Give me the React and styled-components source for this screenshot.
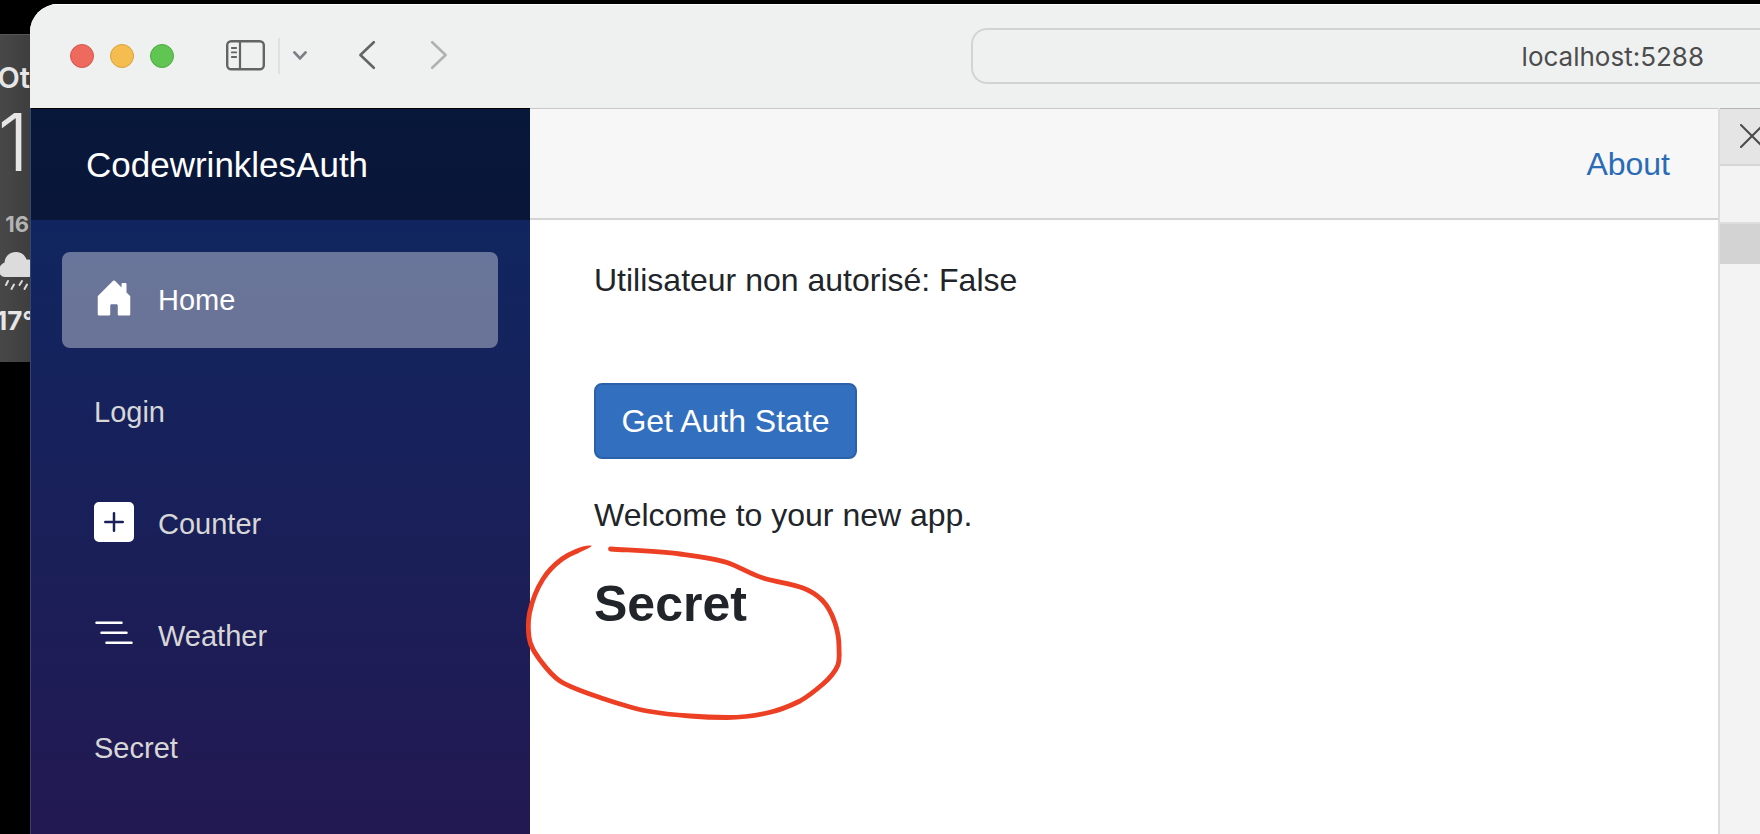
import React from "react";
import styled, { createGlobalStyle } from "styled-components";

const GlobalStyle = createGlobalStyle`
  *, *::before, *::after { box-sizing: border-box; }
  body {
    margin: 0;
    background: #000;
    color: #212529;
    font-family: "Liberation Sans", Arial, sans-serif;
    font-size: 32px;
    line-height: 48px;
    overflow-x: hidden;
  }
  button, input { font: inherit; }
`;

const Desktop = styled.div`
  display: flex;
  min-height: 100vh;
  background: #000;
`;

/* Weather widget, mostly hidden behind the browser window */
const Widget = styled.aside`
  width: 30px;
  flex: none;
  align-self: flex-start;
  margin-top: 34px;
  height: 328px;
  overflow: hidden;
  display: flex;
  flex-direction: column;
  align-items: flex-end;
  background: linear-gradient(90deg, #484848, #3e3e3e);
  border-top: 1px solid #555;
  color: #e6e6e6;
  font-family: Inter, sans-serif;
  white-space: nowrap;
`;

const City = styled.div`
  margin-top: 23px;
  font-size: 29px;
  font-weight: 600;
  line-height: 40px;
`;

const Temperature = styled.div`
  padding-right: 1px;
  font-size: 80px;
  font-weight: 300;
  line-height: 88px;
`;

const Hour = styled.div`
  margin-top: 22px;
  padding-right: 1px;
  font-size: 22px;
  font-weight: 700;
  line-height: 32px;
  color: #b4b4b4;
`;

const RainIcon = styled.svg`
  display: block;
  flex: none;
  width: 30px;
  height: 40px;
  margin-top: 12px;
`;

const HourTemperature = styled.div`
  align-self: flex-start;
  margin: 13px 0 0 -4px;
  font-size: 26px;
  font-weight: 700;
  line-height: 32px;
`;

const BrowserWindow = styled.div`
  flex: 1;
  min-width: 0;
  margin-top: 4px;
  display: flex;
  flex-direction: column;
  border-top-left-radius: 28px;
  overflow: hidden;
  background: #fff;
`;

const TitleBar = styled.header`
  display: grid;
  grid-template-columns: 31fr 26fr;
  align-items: center;
  height: 104px;
  flex: none;
  padding-bottom: 1px;
  background: #eff1f1;
  border-top: 1px solid #fff;
`;

const Controls = styled.div`
  display: flex;
  align-items: center;
  padding-left: 40px;
`;

const Lights = styled.div`
  display: flex;
  gap: 16px;
  margin-right: 52px;
`;

const Light = styled.button`
  width: 24px;
  height: 24px;
  padding: 0;
  border-radius: 50%;
  border: 1px solid ${(p) => p.$edge};
  background: ${(p) => p.$color};
`;

const ToolButton = styled.button`
  display: flex;
  padding: 0;
  border: 0;
  background: none;
  color: ${(p) => (p.$faded ? "#b0b2b2" : "#636565")};
  margin-right: ${(p) => p.$gap || 0}px;

  svg { display: block; }
`;

const Divider = styled.span`
  width: 2px;
  height: 36px;
  margin-right: 12px;
  background: #e0e2e2;
`;

const Address = styled.input`
  width: 100%;
  height: 56px;
  padding: 0 56px 0 16px;
  border: 2px solid #d2d4d3;
  border-right: 0;
  border-radius: 16px 0 0 16px;
  background: transparent;
  color: #4c4c4c;
  font-family: Inter, sans-serif;
  font-size: 26px;
  text-align: right;
`;

const Viewport = styled.div`
  flex: 1;
  display: flex;
`;

const Sidebar = styled.div`
  width: 500px;
  flex: none;
  background: linear-gradient(180deg, #0d2862, #231952);
  border-left: 1px solid rgba(255, 255, 255, 0.15);
`;

const Brand = styled.div`
  display: flex;
  align-items: center;
  height: 112px;
  padding-left: 55px;
  border-top: 1px solid #000;
  background: rgba(0, 0, 0, 0.4);

  a {
    color: #fff;
    font-size: 35px;
    text-decoration: none;
  }
`;

const Nav = styled.nav`
  display: flex;
  flex-direction: column;
  gap: 16px;
  padding: 32px 32px 32px 31px;
`;

const NavItem = styled.a`
  display: flex;
  align-items: center;
  gap: 24px;
  height: 96px;
  padding: 0 32px;
  border-radius: 8px;
  font-size: 29px;
  text-decoration: none;
  color: ${(p) => (p.$active ? "#fff" : "#d7d7d7")};
  background: ${(p) => (p.$active ? "rgba(255, 255, 255, 0.37)" : "transparent")};
`;

const NavIcon = styled.svg`
  width: 40px;
  height: 40px;
  margin-bottom: 4px;
  fill: #fff;
`;

const Page = styled.div`
  flex: 1;
  min-width: 0;
`;

const TopRow = styled.div`
  display: flex;
  align-items: center;
  justify-content: flex-end;
  height: 112px;
  padding-right: 48px;
  background: #f7f7f7;
  border-top: 1px solid #c9c9c9;
  border-bottom: 2px solid #d4d4d4;

  a {
    color: #2a6bb6;
    text-decoration: none;
  }
`;

const Content = styled.main`
  padding: 36px 48px 32px 64px;
`;

const Text = styled.p`
  margin: 0 0 35px;
`;

const AuthStatus = styled(Text)`
  margin-bottom: 79px;
`;

const PrimaryButton = styled.button`
  display: block;
  min-width: 263px;
  margin-bottom: 32px;
  padding: 12px 24px;
  border: 2px solid #2b61a8;
  border-radius: 8px;
  background: #336fbf;
  color: #fff;
`;

const Marked = styled.div`
  position: relative;
`;

const Heading = styled.h3`
  margin: 0;
  font-size: 50px;
  line-height: 60px;
  font-weight: 700;
`;

const Scribble = styled.svg`
  position: absolute;
  left: -74px;
  top: -34px;
  width: 330px;
  height: 185px;
  pointer-events: none;
`;

const Inspector = styled.aside`
  width: 42px;
  flex: none;
  overflow: hidden;
  border-left: 2px solid #dcdcdc;
  background: #f3f3f3;
`;

const InspectorHeader = styled.div`
  height: 58px;
  padding: 15px 0 0 20px;
  background: #e5e5e5;
  border-top: 1px solid #b4b4b4;
  border-bottom: 2px solid #d6d6d6;
`;

const InspectorRow = styled.div`
  height: 42px;
  margin-top: 56px;
  border-top: 2px solid #dedede;
  background: #d3d3d3;
`;

const icons = {
  home: "M6.5 14.5v-3.505c0-.245.25-.495.5-.495h2c.25 0 .5.25.5.5v3.5a.5.5 0 0 0 .5.5h4a.5.5 0 0 0 .5-.5v-7a.5.5 0 0 0-.146-.354L13 5.793V2.5a.5.5 0 0 0-.5-.5h-1a.5.5 0 0 0-.5.5v1.293L8.354 1.146a.5.5 0 0 0-.708 0l-6 6A.5.5 0 0 0 1.5 7.5v7a.5.5 0 0 0 .5.5h4a.5.5 0 0 0 .5-.5Z",
  counter:
    "M2 0a2 2 0 0 0-2 2v12a2 2 0 0 0 2 2h12a2 2 0 0 0 2-2V2a2 2 0 0 0-2-2H2zm6.5 4.5v3h3a.5.5 0 0 1 0 1h-3v3a.5.5 0 0 1-1 0v-3h-3a.5.5 0 0 1 0-1h3v-3a.5.5 0 0 1 1 0z",
  weather:
    "M4.5 11.5A.5.5 0 0 1 5 11h10a.5.5 0 0 1 0 1H5a.5.5 0 0 1-.5-.5zm-2-4A.5.5 0 0 1 3 7h10a.5.5 0 0 1 0 1H3a.5.5 0 0 1-.5-.5zm-2-4A.5.5 0 0 1 1 3h10a.5.5 0 0 1 0 1H1a.5.5 0 0 1-.5-.5z",
};

const links = [
  { label: "Home", icon: "home", active: true },
  { label: "Login" },
  { label: "Counter", icon: "counter" },
  { label: "Weather", icon: "weather" },
  { label: "Secret" },
];

const lights = [
  { name: "Close", color: "#ee6a5f", edge: "#d5554b" },
  { name: "Minimize", color: "#f5bd4f", edge: "#d9a13c" },
  { name: "Zoom", color: "#61c554", edge: "#4cab40" },
];

export default function App() {
  return (
    <>
      <GlobalStyle />
      <Desktop>
        <Widget>
          <City>Ot</City>
          <Temperature>1</Temperature>
          <Hour>16</Hour>
          <RainIcon viewBox="0 0 30 40" aria-hidden="true">
            <path
              d="M5 25C1 25-1 22-1 18.500C-1 15 1 12 4.500 10.500C5 4 10 0 16 0C21 0 25 3 26.500 7.500C33 7 36 11 36 16S32 25 28 25Z"
              fill="#dcdcdc"
            />
            <path
              d="M8 29l-2 4M14 32.500l-2.500 4.500M22 29l-2.500 4M27 32.500l-2.500 4.500"
              stroke="#dcdcdc"
              strokeWidth="2"
              strokeLinecap="round"
            />
          </RainIcon>
          <HourTemperature>17°</HourTemperature>
        </Widget>

        <BrowserWindow>
          <TitleBar>
            <Controls>
              <Lights>
                {lights.map((l) => (
                  <Light key={l.name} aria-label={l.name} $color={l.color} $edge={l.edge} />
                ))}
              </Lights>
              <ToolButton aria-label="Show sidebar" $gap={13}>
                <svg width="39" height="32" viewBox="0 0 39 32" fill="none" stroke="currentColor">
                  <rect x="1.2" y="1.2" width="36.6" height="28" rx="4" strokeWidth="2.4" />
                  <path d="M14 1v28" strokeWidth="2.2" />
                  <path d="M5.8 8h4.4M5.8 12.4h4.4M5.8 17h4.4" strokeWidth="1.8" strokeLinecap="round" />
                </svg>
              </ToolButton>
              <Divider />
              <ToolButton aria-label="Tab groups" $gap={50}>
                <svg width="16" height="12" viewBox="0 0 16 12" fill="none" stroke="#7d7f84" strokeWidth="2.8" strokeLinecap="round" strokeLinejoin="round">
                  <path d="M2.4 2.4L8 8.4l5.600-6" />
                </svg>
              </ToolButton>
              <ToolButton aria-label="Back" $gap={54}>
                <svg width="18" height="32" viewBox="0 0 18 32" fill="none" stroke="currentColor" strokeWidth="2.6" strokeLinecap="round" strokeLinejoin="round">
                  <path d="M15.800 2.200L2.400 15l13.400 12.800" />
                </svg>
              </ToolButton>
              <ToolButton aria-label="Forward" $faded>
                <svg width="18" height="32" viewBox="0 0 18 32" fill="none" stroke="currentColor" strokeWidth="2.6" strokeLinecap="round" strokeLinejoin="round">
                  <path d="M2.200 2.200L15.600 15 2.200 27.800" />
                </svg>
              </ToolButton>
            </Controls>
            <Address aria-label="Address" defaultValue="localhost:5288" />
          </TitleBar>

          <Viewport>
            <Sidebar>
              <Brand>
                <a href="#">CodewrinklesAuth</a>
              </Brand>
              <Nav>
                {links.map((l) => (
                  <NavItem key={l.label} href="#" $active={l.active}>
                    {l.icon && (
                      <NavIcon viewBox="0 0 16 16" aria-hidden="true">
                        <path d={icons[l.icon]} />
                      </NavIcon>
                    )}
                    {l.label}
                  </NavItem>
                ))}
              </Nav>
            </Sidebar>

            <Page>
              <TopRow>
                <a href="#">About</a>
              </TopRow>
              <Content>
                <AuthStatus>Utilisateur non autorisé: False</AuthStatus>
                <PrimaryButton>Get Auth State</PrimaryButton>
                <Text>Welcome to your new app.</Text>
                <Marked>
                  <Heading>Secret</Heading>
                  <Scribble viewBox="520 540 330 185" aria-hidden="true">
                    <path
                      d="M610.500 549C635 550.500 660 551.500 680 554C698 556.500 714 558.500 727 562.500C740 567 750 574 763 578C776 582 791 583.500 803 588C811 591 817 595 822 600C828 606 832 614 835 623C838 632 839 640 839 647C839 654 840 659 838 665C835 672 830 678 823 684C816 690 809 696 800 701C790 706 779 710.500 767 713C754 716 741 717.500 727 717.500C714 717.500 702 717 690 716C675 715 661 713.500 647 711C631 708 615 702.500 600 697.500C585 692.500 570 687.500 560 681C552 676 546 668 540 660C535 653 530 646 529 637C528 629 528 621 529.500 613C532 601 536 590 543 579C548 571 554 565 562 559C566 556 571 553.500 576 551.500"
                      fill="none"
                      stroke="#ec3f23"
                      strokeWidth="4.800"
                      strokeLinecap="round"
                    />
                    <path d="M575 549.300C581 546.500 587 545 591.500 545.500C592 547 585 550 577 553.700Z" fill="#ec3f23" />
                  </Scribble>
                </Marked>
              </Content>
            </Page>

            <Inspector>
              <InspectorHeader>
                <ToolButton aria-label="Close inspector">
                  <svg width="24" height="24" viewBox="0 0 24 24" stroke="#4a4a4a" strokeWidth="2" strokeLinecap="round">
                    <path d="M1 1l22 22M23 1L1 23" />
                  </svg>
                </ToolButton>
              </InspectorHeader>
              <InspectorRow />
            </Inspector>
          </Viewport>
        </BrowserWindow>
      </Desktop>
    </>
  );
}
